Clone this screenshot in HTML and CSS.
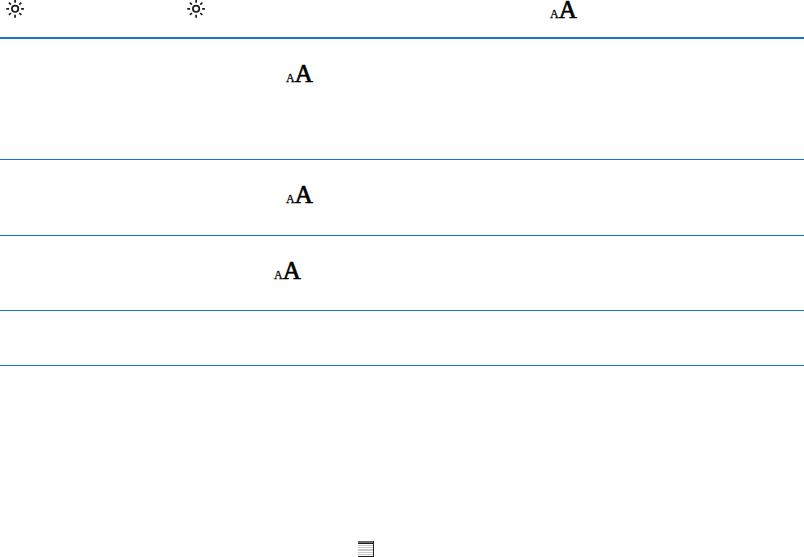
FILE: index.html
```
<!DOCTYPE html>
<html lang="en">
<head>
    <meta charset="UTF-8">
    <meta name="viewport" content="width=device-width, initial-scale=1.0">
    <title>Display settings</title>
    <link rel="stylesheet" href="styles.css">
</head>
<body>
    <svg width="0" height="0" class="defs">
        <symbol id="sun" viewBox="0 0 18 18">
            <g fill="none" stroke="#1c1a1b" stroke-width="1.7">
                <circle cx="9.1" cy="8.8" r="3.2"/>
                <path d="M9.1 0v2.8M9.1 14.8v3M.3 8.8h2.8M15.1 8.8h2.8M2.9 2.6l2 2M13.3 13l2 2M2.9 15l2-2M13.3 4.6l2-2"/>
            </g>
        </symbol>
    </svg>

    <div class="row row-head">
        <svg class="sun"><use href="#sun"/></svg>
        <svg class="sun"><use href="#sun"/></svg>
        <span class="font-size"><small>A</small><b>A</b></span>
    </div>
    <div class="row row-tall">
        <span class="font-size"><small>A</small><b>A</b></span>
    </div>
    <div class="row row-mid">
        <span class="font-size"><small>A</small><b>A</b></span>
    </div>
    <div class="row row-short">
        <span class="font-size"><small>A</small><b>A</b></span>
    </div>
    <div class="row row-empty"></div>

    <div class="footer">
        <svg class="page-icon" viewBox="0 0 16 16" shape-rendering="crispEdges">
            <path fill="#c8c8c8" d="M0 4h15v1H0zM0 6h15v1H0zM0 8h15v2H0zM0 11h15v1H0zM0 13h15v1H0z"/>
            <path fill="#686868" d="M0 0h15v2H0z"/>
            <path fill="#231f20" d="M0 2h15v1H0zM15 0h1v16H0v-1h15z"/>
        </svg>
    </div>
</body>
</html>
```

FILE: styles.css
```
* {
    box-sizing: border-box;
}
body {
    margin: 0;
    height: 557px;
    overflow: hidden;
    display: flex;
    flex-direction: column;
    background: white;
    color: #000;
    font-family: "Liberation Serif", "Times New Roman", serif;
}
.defs {
    display: none;
}
.row {
    display: flex;
    align-items: flex-start;
    border-bottom: 1px solid #1874c4;
}
.row-head {
    height: 39px;
    padding-left: 6px;
    border-bottom-width: 2px;
}
.row-tall {
    height: 121px;
    padding: 25px 0 0 286px;
}
.row-mid {
    height: 76px;
    padding: 25px 0 0 286px;
}
.row-short {
    height: 75px;
    padding: 25px 0 0 274px;
}
.row-empty {
    height: 55px;
}
.sun {
    width: 18px;
    height: 18px;
    margin-right: 163px;
}
.sun + .sun {
    margin-right: 345px;
}
.font-size {
    display: flex;
    align-items: baseline;
    line-height: 20px;
}
.font-size small {
    font-size: 12px;
    -webkit-text-stroke: 0.3px #000;
}
.font-size b {
    font-size: 25px;
    font-weight: normal;
    -webkit-text-stroke: 0.7px #000;
}
.footer {
    margin-top: auto;
    padding-left: 358px;
}
.page-icon {
    display: block;
    width: 16px;
    height: 16px;
}
```
